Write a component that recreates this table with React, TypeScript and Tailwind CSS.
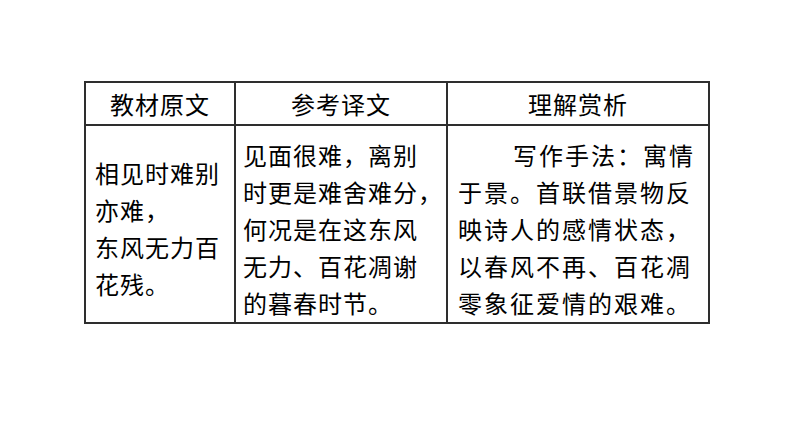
export default function App() {
  const font = { fontFamily: '"Noto Sans CJK SC", "Noto Sans", sans-serif' };

  return (
    <div className="w-[794px] h-[447px] bg-white pl-[84px] pt-[81px] text-black" style={font}>
      <div className="w-[626px] border-2 border-[#2e2e2e]">
        {/* header row */}
        <div className="grid grid-cols-[150px_212px_260px] h-[43px] border-b-2 border-[#2e2e2e] text-[24px] tracking-[1px]">
          <div className="border-r-2 border-[#2e2e2e] flex items-center justify-center">教材原文</div>
          <div className="border-r-2 border-[#2e2e2e] flex items-center justify-center">参考译文</div>
          <div className="flex items-center justify-center">理解赏析</div>
        </div>

        {/* body row */}
        <div className="grid grid-cols-[150px_212px_260px] h-[196px] text-[24px] leading-[37px]">
          <div className="border-r-2 border-[#2e2e2e] pl-[9px] pt-[28px] tracking-[1px]">
            相见时难别
            <br />
            亦难，
            <br />
            东风无力百
            <br />
            花残。
          </div>
          <div className="border-r-2 border-[#2e2e2e] pl-[7px] pt-[10px] tracking-[1px] whitespace-nowrap">
            见面很难，离别
            <br />
            时更是难舍难分，
            <br />
            何况是在这东风
            <br />
            无力、百花凋谢
            <br />
            的暮春时节。
          </div>
          <div className="pl-[10px] pt-[10px] tracking-[2px] whitespace-nowrap">
            <span className="pl-[55px]">写作手法：寓情</span>
            <br />
            于景。首联借景物反
            <br />
            映诗人的感情状态，
            <br />
            以春风不再、百花凋
            <br />
            零象征爱情的艰难。
          </div>
        </div>
      </div>
    </div>
  );
}
